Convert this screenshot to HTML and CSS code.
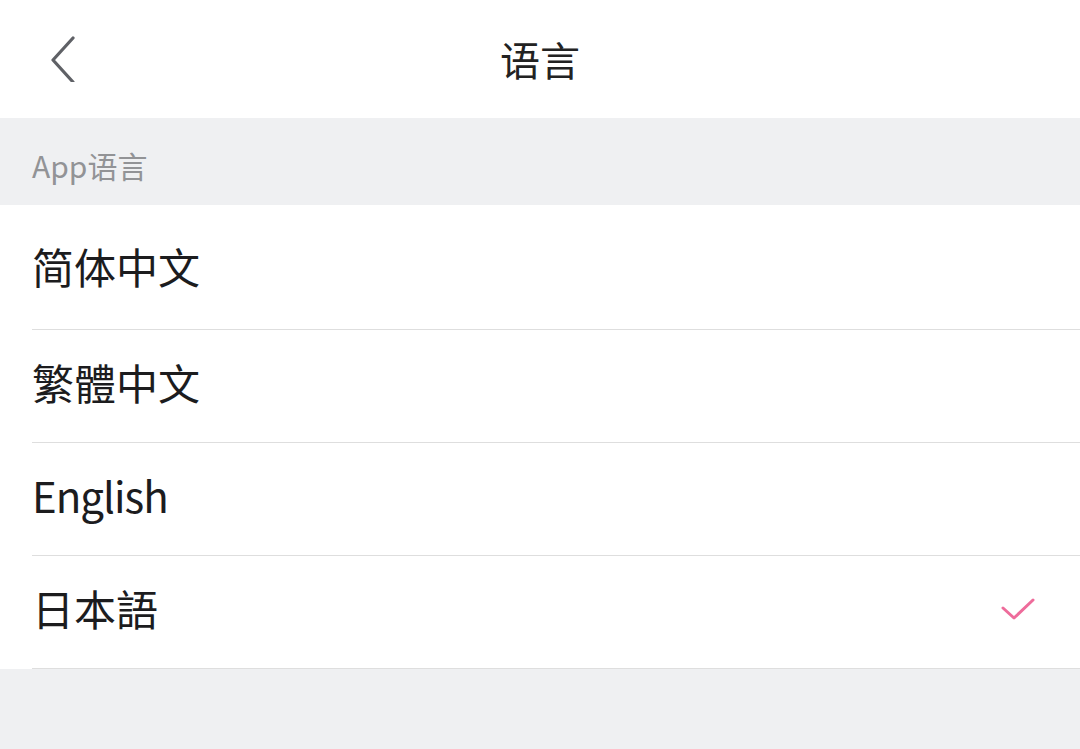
FILE: index.html
```html
<!DOCTYPE html>
<html lang="zh">
<head>
    <meta charset="UTF-8">
    <meta name="viewport" content="width=device-width, initial-scale=1.0">
    <title>语言</title>
    <link rel="stylesheet" href="styles.css">
</head>
<body>
    <div class="topbar">
        <button type="button" class="back" aria-label="返回">
            <svg width="40" height="60" viewBox="0 0 40 60">
                <polyline points="30,16 10,38 30,60" fill="none" stroke="#5f6166" stroke-width="3.2" stroke-linecap="round" stroke-linejoin="round"/>
            </svg>
        </button>
        <h1 class="title">语言</h1>
    </div>

    <div class="section-head">App语言</div>

    <ul class="lang-list">
        <li class="lang first">简体中文</li>
        <li class="lang">繁體中文</li>
        <li class="lang latin">English</li>
        <li class="lang selected">
            <span>日本語</span>
            <svg class="check" width="40" height="30" viewBox="0 0 40 30">
                <polyline points="5,11 16,21 35,3" fill="none" stroke="#ee6c9b" stroke-width="3" stroke-linecap="round" stroke-linejoin="round"/>
            </svg>
        </li>
    </ul>
</body>
</html>
```

FILE: styles.css
```css
body {
    margin: 0;
    background-color: #eff0f2;
    font-family: "Noto Sans CJK SC", "Noto Sans", sans-serif;
    color: #1c1c1e;
}
.topbar {
    position: relative;
    height: 118px;
    background-color: #fff;
    display: flex;
    align-items: center;
    justify-content: center;
}
.back {
    position: absolute;
    left: 43px;
    top: 22px;
    padding: 0;
    border: none;
    background: none;
    width: 40px;
    height: 60px;
}
.back svg {
    display: block;
}
.title {
    margin: 0;
    font-size: 40px;
    font-weight: 400;
    color: #222;
    line-height: 1;
}
.section-head {
    height: 87px;
    box-sizing: border-box;
    padding: 27px 0 0 32px;
    font-size: 30px;
    line-height: 40px;
    color: #929396;
}
.lang-list {
    margin: 0;
    padding: 0 0 0 32px;
    list-style: none;
    background-color: #fff;
}
.lang {
    height: 113px;
    box-sizing: border-box;
    display: flex;
    align-items: center;
    justify-content: space-between;
    padding-right: 42px;
    padding-bottom: 8px;
    border-bottom: 1px solid #dedede;
    font-size: 42px;
    line-height: 1;
}
.lang.first {
    height: 125px;
    padding-top: 6px;
}
.lang.latin {
    letter-spacing: -1px;
}
.lang.selected .check {
    display: block;
    margin-top: 8px;
}
```
